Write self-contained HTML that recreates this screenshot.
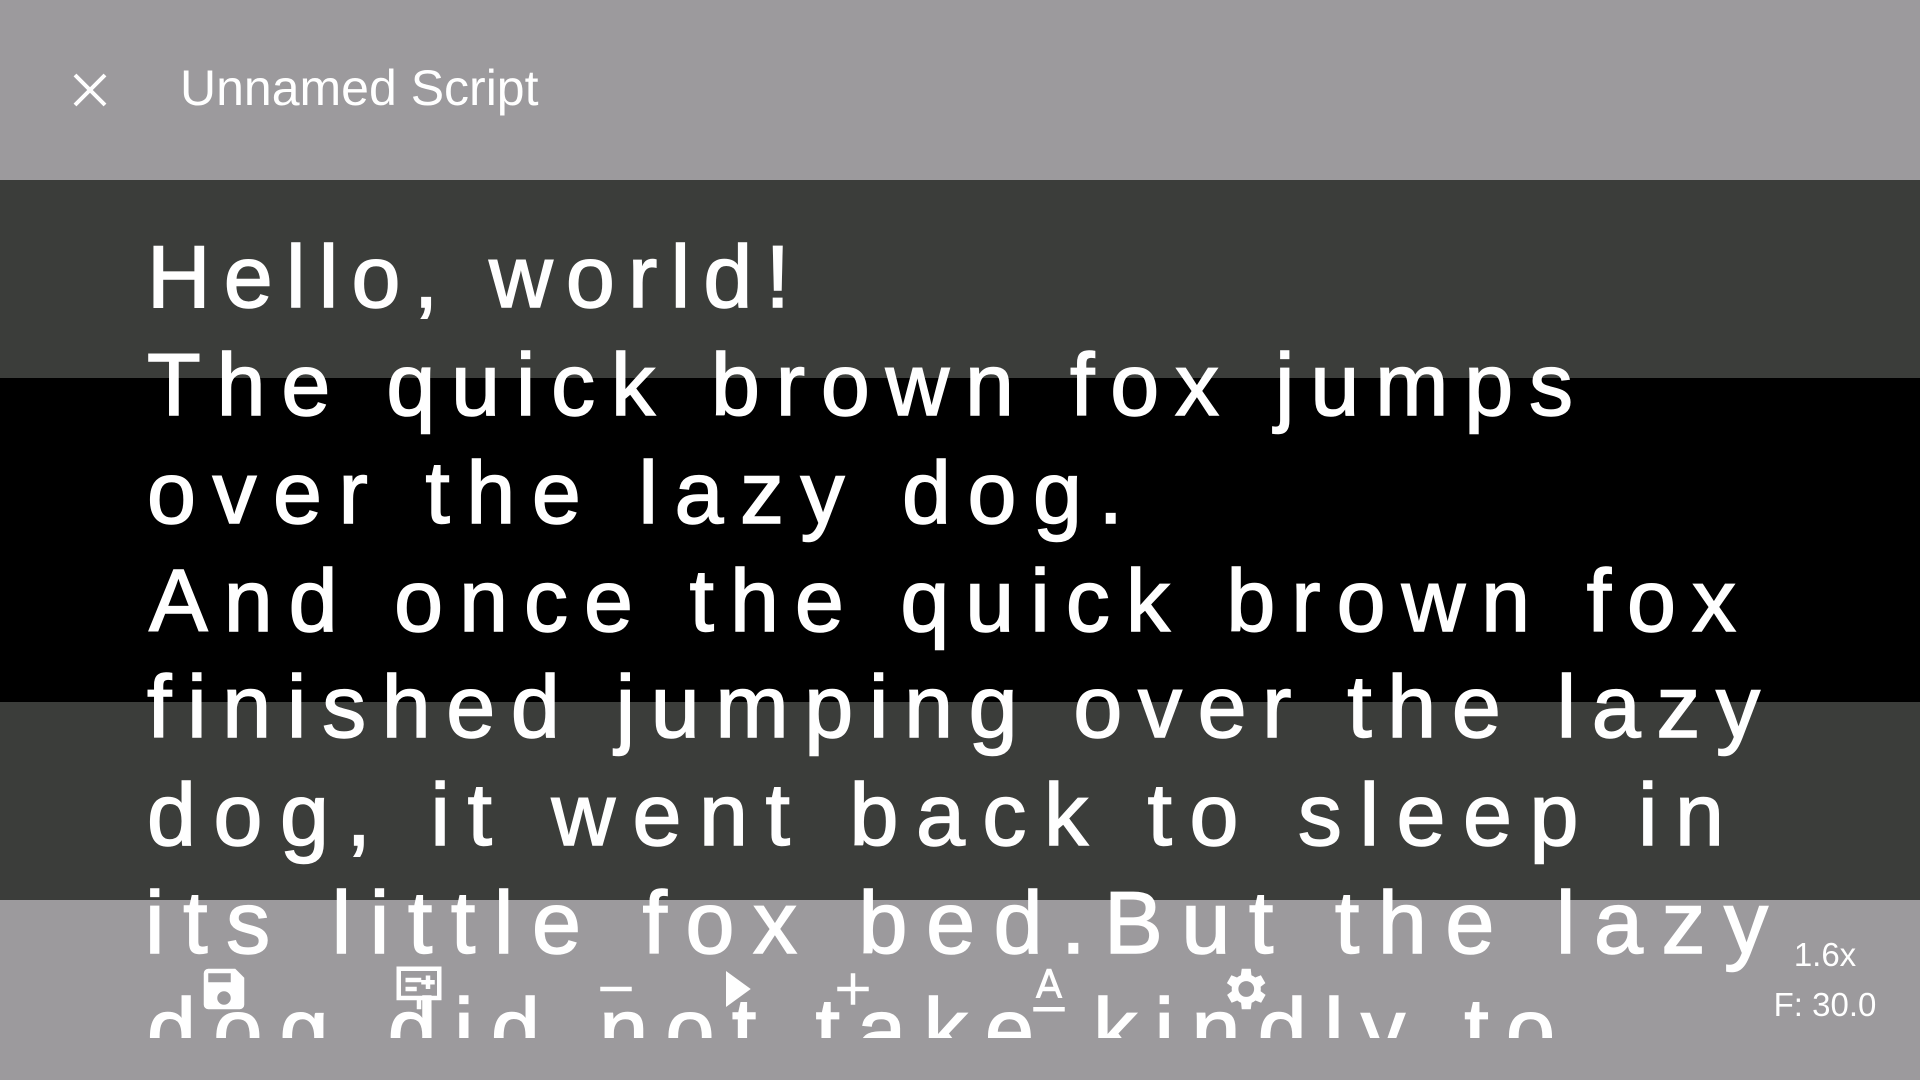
<!DOCTYPE html>
<html><head><meta charset="utf-8"><style>
html,body{margin:0;padding:0;width:1920px;height:1080px;overflow:hidden;background:#9c9a9d;font-family:"Liberation Sans",sans-serif}
.b{position:absolute;left:0;width:1920px}
.ic{position:absolute;top:962px;width:54px;height:54px}
.lbl{position:absolute;color:#fff;font-size:33px;width:200px;text-align:center;left:1725px}
</style></head><body>
<div class="b" style="top:0;height:180px;background:#9c9a9d"></div>
<div class="b" style="top:180px;height:198px;background:#3b3d3a"></div>
<div class="b" style="top:378px;height:324px;background:#000"></div>
<div class="b" style="top:702px;height:198px;background:#3b3d3a"></div>
<svg style="position:absolute;left:72px;top:72px" width="36" height="36" viewBox="0 0 36 36"><path d="M3 3L33 33M33 3L3 33" stroke="#fff" stroke-width="4"/></svg>
<div style="position:absolute;left:180px;top:59px;color:#fff;font-size:50px">Unnamed Script</div>
<svg style="position:absolute;left:0;top:0" width="1920" height="1038" viewBox="0 0 1920 1038">
<g fill="#fff" stroke="#fff" stroke-width="1.5" font-family="Liberation Sans, sans-serif" font-size="88">
<text x="147" y="307" textLength="643" lengthAdjust="spacing">Hello, world!</text>
<text x="147" y="415" textLength="1426" lengthAdjust="spacing">The quick brown fox jumps</text>
<text x="147" y="523" textLength="976" lengthAdjust="spacing">over the lazy dog.</text>
<text x="149" y="631" textLength="1587" lengthAdjust="spacing">And once the quick brown fox</text>
<text x="147" y="737" textLength="1613" lengthAdjust="spacing">finished jumping over the lazy</text>
<text x="147" y="845" textLength="1577" lengthAdjust="spacing">dog, it went back to sleep in</text>
<text x="145" y="953" textLength="1623" lengthAdjust="spacing">its little fox bed.But the lazy</text>
<text x="147" y="1060" textLength="1408" lengthAdjust="spacing">dog did not take kindly to</text>
</g></svg>
<svg class="ic" style="left:197px" viewBox="0 0 24 24"><path fill="#fff" d="M17 3H5a2 2 0 0 0-2 2v14a2 2 0 0 0 2 2h14a2 2 0 0 0 2-2V7l-4-4zm-5 16a3 3 0 1 1 0-6 3 3 0 0 1 0 6zm3-10H5V5h10v4z"/></svg>
<svg class="ic" style="left:392px" viewBox="0 0 24 24"><path fill="none" stroke="#fff" stroke-width="2" d="M3 3h18v13H3zM6 8h7M6 12h5M16 6v6M13 9h6M12 16v5"/></svg>
<svg class="ic" style="left:589px" viewBox="0 0 24 24"><path d="M5 12h14" stroke="#fff" stroke-width="2"/></svg>
<svg class="ic" style="left:708px" viewBox="0 0 24 24"><path fill="#fff" d="M8 4v16l11-8z"/></svg>
<svg class="ic" style="left:826px" viewBox="0 0 24 24"><path d="M5 12h14M12 5v14" stroke="#fff" stroke-width="2"/></svg>
<svg class="ic" style="left:1022px" viewBox="0 0 24 24"><path fill="#fff" d="M5 20h14v2H5zM11 3h2l5 13h-2l-1.2-3H9.2L8 16H6zm-1 8h4l-2-5.5z"/></svg>
<svg class="ic" style="left:1217px" viewBox="0 0 24 24"><path fill="#fff" d="M19.4 13a7.5 7.5 0 0 0 0-2l2.1-1.6-2-3.5-2.5 1a7 7 0 0 0-1.7-1L15 3h-4l-.4 2.9a7 7 0 0 0-1.7 1l-2.5-1-2 3.5L6.6 11a7.5 7.5 0 0 0 0 2l-2.1 1.6 2 3.5 2.5-1a7 7 0 0 0 1.7 1L11 21h4l.4-2.9a7 7 0 0 0 1.7-1l2.5 1 2-3.5zM13 15.5a3.5 3.5 0 1 1 0-7 3.5 3.5 0 0 1 0 7z"/></svg>
<div class="lbl" style="top:936px">1.6x</div>
<div class="lbl" style="top:986px">F: 30.0</div>
</body></html>
